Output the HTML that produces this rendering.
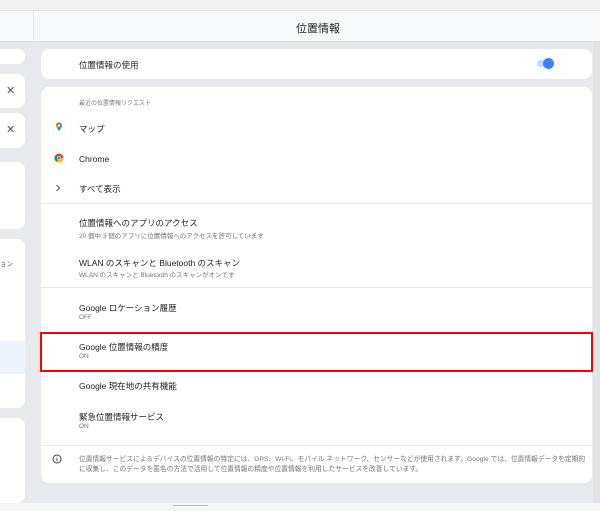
<!DOCTYPE html>
<html><head><meta charset="utf-8"><style>
*{margin:0;padding:0;box-sizing:border-box}
body{width:600px;height:511px;overflow:hidden;background:#e8e9ec;font-family:"Liberation Sans","Noto Sans CJK JP",sans-serif;color:#202124;position:relative}
.abs{position:absolute}
.top{left:0;top:0;width:600px;height:11px;background:#f1f1f2;border-bottom:1px solid #e4e4e4}
.hdr{left:0;top:11px;width:600px;height:31px;background:#f8f9fa;border-bottom:1px solid #dcdcdf}
.hdr .t{position:absolute;left:0;right:0;top:9px;text-align:center;font-size:11px;padding-left:36px}
.lsep{left:33px;top:11px;width:1px;height:31px;background:#e6e6e8}
.lc{left:-10px;width:35px;background:#fff;border-radius:8px}
.card{left:41px;width:551px;background:#fff;border-radius:8px}
.item{position:absolute;left:79px;font-size:8.5px;color:#222}
.sub{position:absolute;left:79px;font-size:6.5px;color:#6f7378}
.div{position:absolute;left:41px;width:551px;height:1px;background:#e6e7ea}
.x{position:absolute;left:6px;font-size:11px;color:#555}
</style></head><body>
<div class="abs top"></div>
<div class="abs hdr"><div class="t">位置情報</div></div>
<div class="abs lsep"></div>
<div class="abs" style="left:593px;top:42px;width:7px;height:461px;background:#e2e3e6"></div>
<div class="abs lc" style="top:49px;height:15px"></div>
<div class="abs lc" style="top:74px;height:34px"></div><div class="x" style="top:84px">✕</div>
<div class="abs lc" style="top:113px;height:35px"></div><div class="x" style="top:123px">✕</div>
<div class="abs lc" style="top:162px;height:67px"></div>
<div class="abs lc" style="top:239px;height:169px"></div>
<div class="abs" style="left:0;top:341px;width:25px;height:33px;background:#eef3fd"></div>
<div class="abs" style="left:0;top:258px;font-size:6.5px;color:#555">ョン</div>
<div class="abs lc" style="top:418px;height:85px"></div>
<div class="abs" style="left:0;top:503px;width:600px;height:8px;background:#f6f6f7"></div>
<div class="abs" style="left:173px;top:505px;width:35px;height:1px;background:#bbb"></div>

<div class="abs card" style="top:49px;height:30px"></div>
<div class="item" style="top:59px">位置情報の使用</div>
<div class="abs" style="left:537px;top:60px;width:14px;height:7px;border-radius:4px;background:#c6d8fb"></div>
<div class="abs" style="left:543px;top:58px;width:11px;height:11px;border-radius:50%;background:#3b82f6"></div>

<div class="abs card" style="top:87px;height:396px"></div>
<div class="abs" style="left:79px;top:98px;font-size:6px;color:#777">最近の位置情報リクエスト</div>
<svg class="abs" style="left:52px;top:120px" width="14" height="14" viewBox="0 0 14 14"><rect width="14" height="14" rx="2" fill="#fff" stroke="#eee" stroke-width=".5"/><path d="M7 2.5a3 3 0 0 1 3 3c0 2-3 5.5-3 5.5S4 7.5 4 5.5a3 3 0 0 1 3-3z" fill="#34a853"/><path d="M4 5.5a3 3 0 0 1 3-3l0 3z" fill="#ea4335"/><path d="M7 2.5a3 3 0 0 1 3 3H7z" fill="#4285f4"/><path d="M4 5.5h3L5 8z" fill="#fbbc04"/><circle cx="7" cy="5.5" r="1.1" fill="#fff"/></svg>
<div class="item" style="top:123px">マップ</div>
<svg class="abs" style="left:52px;top:151px" width="14" height="14" viewBox="0 0 14 14"><rect width="14" height="14" rx="2" fill="#fff" stroke="#eee" stroke-width=".5"/><circle cx="7" cy="7" r="4.5" fill="#db4437"/><path d="M7 7L11.5 7A4.5 4.5 0 0 1 4.75 10.9z" fill="#fbbc05"/><path d="M7 7L4.75 10.9A4.5 4.5 0 0 1 3.1 4.75z" fill="#0f9d58"/><circle cx="7" cy="7" r="2" fill="#fff"/><circle cx="7" cy="7" r="1.5" fill="#4285f4"/></svg>
<div class="item" style="top:154px">Chrome</div>
<svg class="abs" style="left:55px;top:184px" width="6" height="8" viewBox="0 0 6 8"><path d="M1.5 1l3 3-3 3" fill="none" stroke="#555" stroke-width="1"/></svg>
<div class="item" style="top:183px">すべて表示</div>
<div class="div" style="top:203px"></div>
<div class="item" style="top:217px">位置情報へのアプリのアクセス</div>
<div class="sub" style="top:230px">20 個中 3 個のアプリに位置情報へのアクセスを許可しています</div>
<div class="item" style="top:257px">WLAN のスキャンと Bluetooth のスキャン</div>
<div class="sub" style="top:269px">WLAN のスキャンと Bluetooth のスキャンがオンです</div>
<div class="div" style="top:287px"></div>
<div class="item" style="top:302px">Google ロケーション履歴</div>
<div class="sub" style="top:314px">OFF</div>
<div class="abs" style="left:40px;top:332px;width:553px;height:40px;border:2.5px solid #f00"></div>
<div class="item" style="top:341px">Google 位置情報の精度</div>
<div class="sub" style="top:353px">ON</div>
<div class="item" style="top:380px">Google 現在地の共有機能</div>
<div class="item" style="top:411px">緊急位置情報サービス</div>
<div class="sub" style="top:423px">ON</div>
<div class="div" style="top:445px"></div>
<svg class="abs" style="left:52px;top:454px" width="10" height="10" viewBox="0 0 10 10"><circle cx="5" cy="5" r="4" fill="none" stroke="#444" stroke-width="1"/><path d="M5 4.3v3M5 2.6v.8" stroke="#444" stroke-width="1"/></svg>
<div class="abs" style="left:79px;top:455px;width:520px;white-space:nowrap;font-size:6.75px;line-height:10px;color:#6f7378">位置情報サービスによるデバイスの位置情報の特定には、GPS、Wi-Fi、モバイル ネットワーク、センサーなどが使用されます。Google では、位置情報データを定期的<br>に収集し、このデータを匿名の方法で活用して位置情報の精度や位置情報を利用したサービスを改善しています。</div>
</body></html>
